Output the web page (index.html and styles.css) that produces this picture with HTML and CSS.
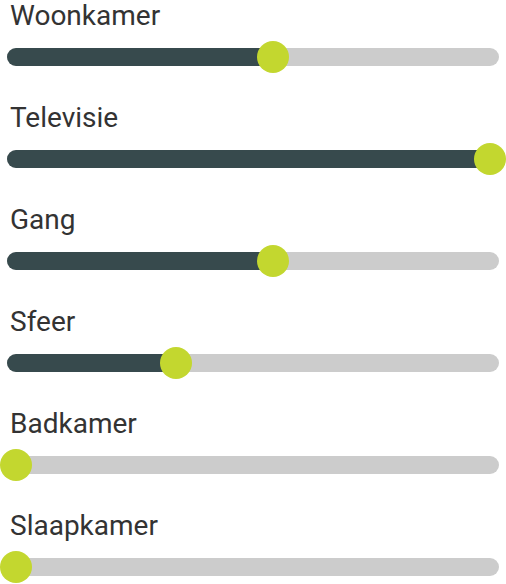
FILE: index.html
```html
<!DOCTYPE html>
<html lang="nl">
<head>
<meta charset="utf-8">
<title>Dimmers</title>
<link rel="stylesheet" href="styles.css">
</head>
<body>
<main class="list">
  <section class="row">
    <div class="label">Woonkamer</div>
    <div class="track" style="--v:0.542"><div class="fill"></div><div class="thumb"></div></div>
  </section>
  <section class="row">
    <div class="label">Televisie</div>
    <div class="track" style="--v:1"><div class="fill"></div><div class="thumb"></div></div>
  </section>
  <section class="row">
    <div class="label">Gang</div>
    <div class="track" style="--v:0.542"><div class="fill"></div><div class="thumb"></div></div>
  </section>
  <section class="row">
    <div class="label">Sfeer</div>
    <div class="track" style="--v:0.338"><div class="fill"></div><div class="thumb"></div></div>
  </section>
  <section class="row">
    <div class="label">Badkamer</div>
    <div class="track" style="--v:0"><div class="fill"></div><div class="thumb"></div></div>
  </section>
  <section class="row">
    <div class="label">Slaapkamer</div>
    <div class="track" style="--v:0"><div class="fill"></div><div class="thumb"></div></div>
  </section>
</main>
</body>
</html>
```
FILE: styles.css
```css
html, body {
  margin: 0;
  padding: 0;
  background: #ffffff;
}
body {
  font-family: Roboto, "Liberation Sans", sans-serif;
  color: #333333;
}
.list {
  display: flex;
  flex-direction: column;
}
.row {
  height: 102px;
  display: flex;
  flex-direction: column;
}
.label {
  font-size: 28px;
  line-height: 32px;
  padding-left: 10px;
  color: #333333;
}
.track {
  position: relative;
  margin: 16px 7px 0 7px;
  height: 18px;
  border-radius: 9px;
  background: #cccccc;
}
.fill {
  width: calc(18px + var(--v) * 474px);
  height: 100%;
  border-radius: 9px;
  background: #374a4d;
}
.thumb {
  position: absolute;
  top: -7px;
  left: calc(var(--v) * 474px - 7px);
  width: 32px;
  height: 32px;
  border-radius: 50%;
  background: #c3d72f;
}
```
